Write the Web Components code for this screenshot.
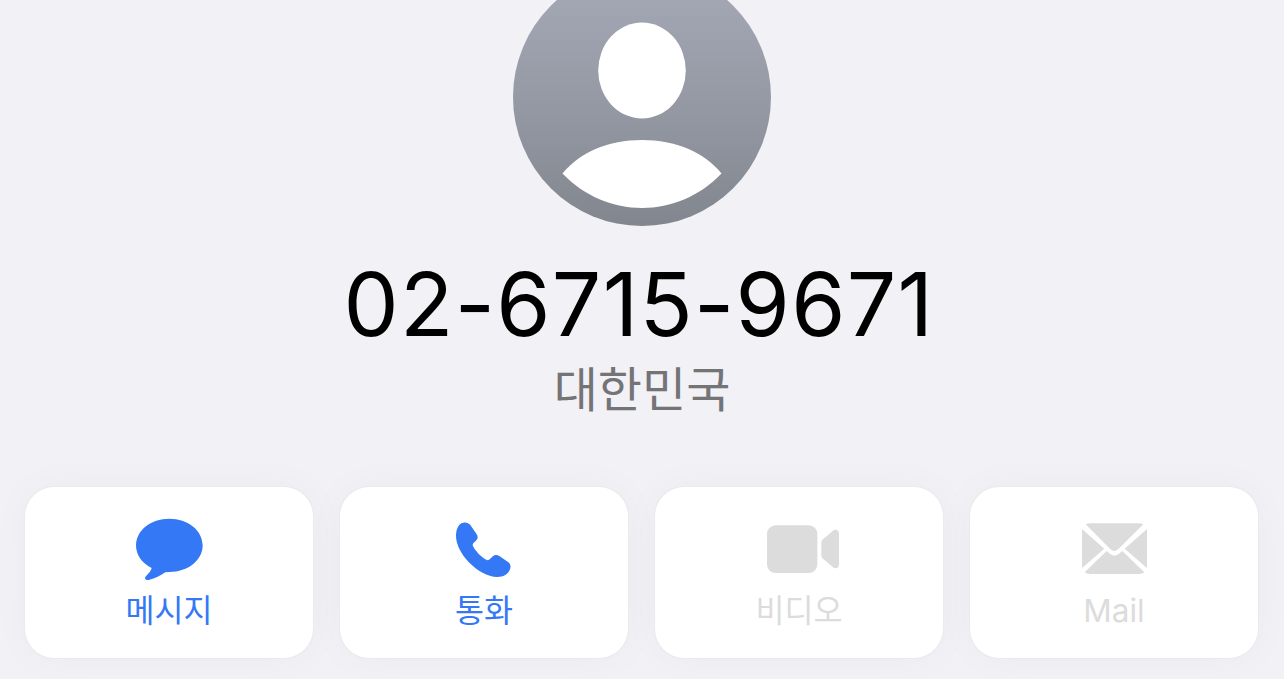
<!DOCTYPE html>
<html lang="ko">
<head>
<meta charset="utf-8">
<title>02-6715-9671</title>
<style>
body {
    margin: 0;
    height: 679px;
    overflow: hidden;
    background-color: #f1f1f6;
    font-family: Inter, "Noto Sans CJK KR", sans-serif;
}
</style>
</head>
<body>

<contact-card>
    <contact-avatar slot="avatar"></contact-avatar>
    <span slot="number">02-6715-9671</span>
    <span slot="region">대한민국</span>
    <action-button icon="message">메시지</action-button>
    <action-button icon="phone">통화</action-button>
    <action-button icon="video" disabled>비디오</action-button>
    <action-button icon="mail" disabled>Mail</action-button>
</contact-card>

<template id="contact-card">
<style>
:host {
    display: flex;
    flex-direction: column;
    align-items: center;
}

h1, p {
    margin: 0;
    font-weight: 400;
    white-space: nowrap;
}

h1 {
    margin-top: 28px;
    padding-right: 6px;
    font-size: 87.5px;
    line-height: 100px;
    letter-spacing: 1.3px;
    /* keeps the hyphens low between digits */
    font-feature-settings: "calt" 0;
    color: #000;
}

p {
    margin-top: 2px;
    font-family: "Noto Sans CJK KR", sans-serif;
    font-size: 48px;
    line-height: 60px;
    color: #747477;
}

.actions {
    align-self: stretch;
    display: grid;
    grid-template-columns: repeat(4, 1fr);
    column-gap: 27px;
    margin-top: 71px;
    padding: 0 26px 0 25px;
}
</style>

<slot name="avatar"></slot>
<h1><slot name="number"></slot></h1>
<p><slot name="region"></slot></p>
<div class="actions"><slot></slot></div>
</template>

<template id="contact-avatar">
<style>
:host {
    display: block;
    width: 258px;
    height: 258px;
    margin-top: -32px;
}

svg {
    display: block;
}
</style>

<svg width="258" height="258" viewBox="0 0 258 258">
    <defs>
        <linearGradient id="shade" x1="0" y1="0" x2="0" y2="1">
            <stop offset="0" stop-color="#a6aab7"/>
            <stop offset="0.5" stop-color="#959aa5"/>
            <stop offset="1" stop-color="#82868e"/>
        </linearGradient>
    </defs>
    <circle cx="129" cy="129" r="129" fill="url(#shade)"/>
    <ellipse cx="129" cy="102.5" rx="43.8" ry="48" fill="#fff"/>
    <path d="M49.500 205.500C67 184 95 172 129 172S191 184 208.500 205.500C187 228 158 240 129 240S71 228 49.500 205.500Z" fill="#fff"/>
</svg>
</template>

<template id="action-button">
<style>
:host {
    display: flex;
    flex-direction: column;
    align-items: center;
    row-gap: 8px;
    box-sizing: border-box;
    height: 171px;
    padding-top: 24px;
    border-radius: 29px;
    background-color: #fff;
    box-shadow: 0 0 2px rgba(0, 0, 0, 0.07), 0 0 40px rgba(0, 0, 0, 0.035);
    color: #3478f6;
}

:host([disabled]) {
    color: #dcdcdc;
}

svg {
    display: block;
    fill: currentColor;
}

.label {
    font-size: 31.5px;
    line-height: 40px;
    white-space: nowrap;
}
</style>

<svg width="80" height="72"></svg>
<span class="label"><slot></slot></span>
</template>

<script>
const icons = {
    message: {
        viewBox: "57 18 240 216",
        body: `<path d="M178 41C234 41 278 76 278 121C278 166 234 201 178 201L166 202C151 212 132 222 116 225C105 226 102 219 109 212C117 205 123 197 125 189C96 175 78 150 78 121C78 76 122 41 178 41Z"/>`
    },
    phone: {
        viewBox: "42 18 240 216",
        body: `<path d="M94 55C104 50 115 52 121 60L139 86C145 95 144 101 137 108L130 115C127 118 128 121 130 125C138 140 154 156 169 164C173 166 176 166 179 163L187 155C193 149 201 149 208 153L234 171C242 177 243 184 240 193C234 209 220 216 202 216C172 215 143 199 116 171C91 145 77 114 78 89C79 73 84 61 94 55Z"/>`
    },
    video: {
        viewBox: "57 18 240 216",
        body: `<rect x="81" y="61" width="151" height="143" rx="26"/>
            <path d="M244 113C244 108 246 105 250 102L278 78C286 71 297 74 297 86V178C297 190 286 193 278 186L250 162C246 159 244 156 244 151Z"/>`
    },
    mail: {
        viewBox: "57 18 240 216",
        body: `<path d="M92 58Q97 55 106 55H251Q260 55 265 58L190 132Q178 144 166 132Z"/>
            <path d="M81 72L148 131L81 189Z"/>
            <path d="M276 72L209 131L276 189Z"/>
            <path d="M155 138L163 145Q178 159 194 145L202 138L268 202Q262 207 252 207H105Q95 207 89 202Z"/>`
    }
};

class ContactCard extends HTMLElement {
    constructor() {
        super();
        this.attachShadow({ mode: "open" });
        this.shadowRoot.appendChild(document.getElementById("contact-card").content.cloneNode(true));
    }
}

class ContactAvatar extends HTMLElement {
    constructor() {
        super();
        this.attachShadow({ mode: "open" });
        this.shadowRoot.appendChild(document.getElementById("contact-avatar").content.cloneNode(true));
    }
}

class ActionButton extends HTMLElement {
    constructor() {
        super();
        this.attachShadow({ mode: "open" });
        this.shadowRoot.appendChild(document.getElementById("action-button").content.cloneNode(true));
    }

    static get observedAttributes() {
        return ["icon"];
    }

    // Swap the drawing whenever the icon name changes.
    attributeChangedCallback(property, oldValue, newValue) {
        if (oldValue === newValue || !icons[newValue]) return;
        const svg = this.shadowRoot.querySelector("svg");
        svg.setAttribute("viewBox", icons[newValue].viewBox);
        svg.innerHTML = icons[newValue].body;
    }
}

customElements.define("contact-card", ContactCard);
customElements.define("contact-avatar", ContactAvatar);
customElements.define("action-button", ActionButton);
</script>
</body>
</html>
